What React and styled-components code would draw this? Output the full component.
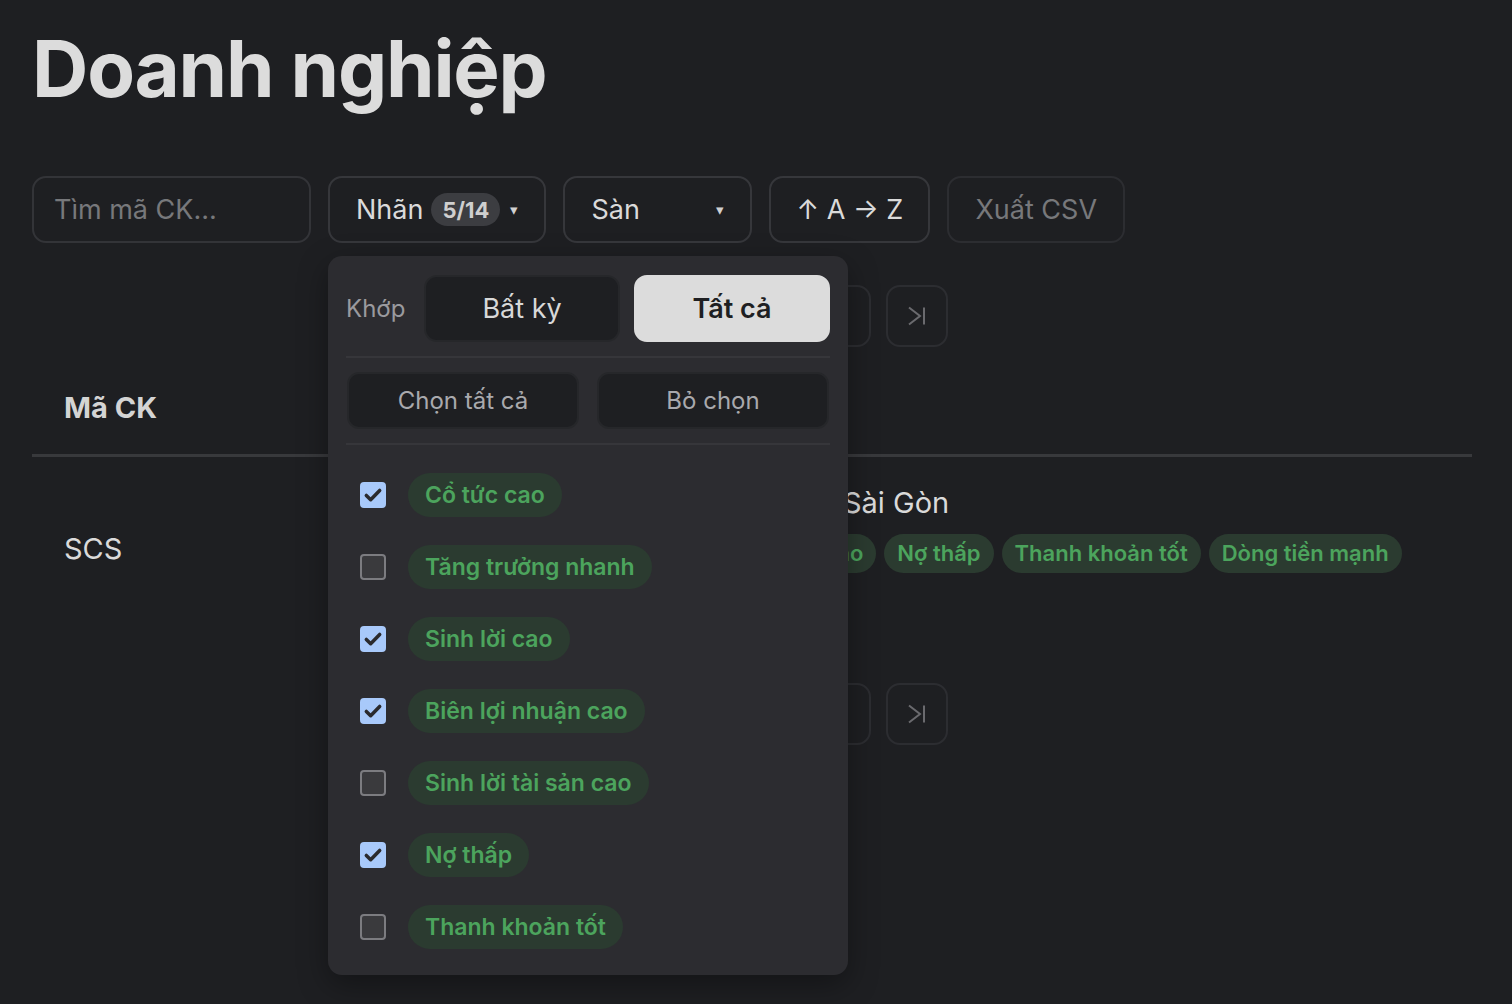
import React from "react";
import styled, { createGlobalStyle } from "styled-components";

const GlobalStyle = createGlobalStyle`
  html, body {
    margin: 0;
    background: #1e1f22;
    color: #dadada;
    font-family: Inter, "Noto Sans", "Liberation Sans", sans-serif;
  }
  * { box-sizing: border-box; }
`;

const LABELS = [
  { name: "Cổ tức cao", on: true },
  { name: "Tăng trưởng nhanh", on: false },
  { name: "Sinh lời cao", on: true },
  { name: "Biên lợi nhuận cao", on: true },
  { name: "Sinh lời tài sản cao", on: false },
  { name: "Nợ thấp", on: true },
  { name: "Thanh khoản tốt", on: false },
  { name: "Dòng tiền mạnh", on: true },
  { name: "Định giá thấp", on: false },
  { name: "Vốn hóa lớn", on: false },
  { name: "Biến động thấp", on: false },
  { name: "Tăng trưởng doanh thu", on: false },
  { name: "Tăng trưởng lợi nhuận", on: false },
  { name: "Nhà nước sở hữu", on: false },
];

const ROW_TAGS = [
  "Cổ tức cao",
  "Sinh lời cao",
  "Biên lợi nhuận cao",
  "Nợ thấp",
  "Thanh khoản tốt",
  "Dòng tiền mạnh",
];

export default function App() {
  return (
    <>
      <GlobalStyle />
      <Page>
        <Title>Doanh nghiệp</Title>
        <Toolbar>
          <SearchInput placeholder="Tìm mã CK..." />
          <FilterWrap>
            <ToolButton>
              Nhãn <Count>5/14</Count>
              <Caret>▾</Caret>
            </ToolButton>
            <Dropdown>
              <MatchRow>
                <MatchLabel>Khớp</MatchLabel>
                <SegButton>Bất kỳ</SegButton>
                <SegButton active>Tất cả</SegButton>
              </MatchRow>
              <Divider />
              <BulkRow>
                <BulkButton>Chọn tất cả</BulkButton>
                <BulkButton>Bỏ chọn</BulkButton>
              </BulkRow>
              <Divider />
              <LabelList>
                {LABELS.map((l) => (
                  <LabelItem key={l.name}>
                    <Check checked={l.on}>
                      {l.on && (
                        <svg width="20" height="20" viewBox="0 0 24 24">
                          <path
                            d="M4 12.5l5.2 5.2L20 6.5"
                            fill="none"
                            stroke="#2a2a2d"
                            strokeWidth="4.2"
                            strokeLinecap="round"
                            strokeLinejoin="round"
                          />
                        </svg>
                      )}
                    </Check>
                    <Tag big>{l.name}</Tag>
                  </LabelItem>
                ))}
              </LabelList>
            </Dropdown>
          </FilterWrap>
          <ToolButton wide>
            Sàn
            <Caret>▾</Caret>
          </ToolButton>
          <ToolButton center>↑ A → Z</ToolButton>
          <ToolButton muted>Xuất CSV</ToolButton>
        </Toolbar>

        <Pager />

        <Table>
          <thead>
            <tr>
              <Th>Mã CK</Th>
              <Th>Tên</Th>
              <Th />
            </tr>
          </thead>
          <tbody>
            <tr>
              <TdCode>SCS</TdCode>
              <TdName>
                <CompanyName>Công ty Cổ phần Dịch vụ Hàng hóa Sài Gòn</CompanyName>
                <TagRow>
                  {ROW_TAGS.map((t) => (
                    <Tag key={t}>{t}</Tag>
                  ))}
                </TagRow>
              </TdName>
              <TdRest />
            </tr>
          </tbody>
        </Table>

        <Pager />
      </Page>
    </>
  );
}

function Pager() {
  return (
    <PagerBar>
      <PageBtn>
        <PageIcon d="M20 3.5 9 12l11 8.5" bar={5} />
      </PageBtn>
      <PageBtn>
        <PageIcon d="M17.5 3.5 6.5 12l11 8.5" />
      </PageBtn>
      <PageInfo>1 / 1</PageInfo>
      <PageBtn>
        <PageIcon d="M6.5 3.5 17.5 12l-11 8.5" />
      </PageBtn>
      <PageBtn>
        <PageIcon d="M4 3.5 15 12 4 20.5" bar={19} />
      </PageBtn>
    </PagerBar>
  );
}

function PageIcon({ d, bar }) {
  return (
    <svg width="24" height="24" viewBox="0 0 24 24" fill="none" stroke="#6a6a6e" strokeWidth="2" strokeLinecap="butt" strokeLinejoin="miter">
      <path d={d} />
      {bar && <path d={`M${bar} 3.5v17`} />}
    </svg>
  );
}

const Page = styled.div`
  padding: 0 40px 40px 32px;
  min-height: 1004px;
`;

const Title = styled.h1`
  margin: 0;
  padding-top: 22px;
  font-size: 78px;
  line-height: 94px;
  font-weight: 700;
  letter-spacing: -1.2px;
  color: #dcdcdc;
`;

const Toolbar = styled.div`
  display: flex;
  gap: 17px;
  margin-top: 60px;
  height: 67px;
`;

const SearchInput = styled.input`
  width: 279px;
  height: 67px;
  background: transparent;
  border: 2px solid #333438;
  border-radius: 14px;
  padding: 0 20px;
  font: inherit;
  font-size: 27px;
  color: #dadada;
  outline: none;
  &::placeholder { color: #77787b; }
`;

const FilterWrap = styled.div`
  position: relative;
`;

const ToolButton = styled.button`
  height: 67px;
  display: flex;
  align-items: center;
  justify-content: ${({ wide, center }) => (wide ? "space-between" : center ? "center" : "flex-start")};
  width: ${({ wide, center }) => (wide ? "189px" : center ? "161px" : "auto")};
  gap: 8px;
  padding: ${({ center }) => (center ? "0" : "0 26px 0 26px")};
  white-space: nowrap;
  background: transparent;
  border: 2px solid ${({ muted }) => (muted ? "#2c2d31" : "#36373b")};
  border-radius: 14px;
  font: inherit;
  font-size: 27px;
  color: ${({ muted }) => (muted ? "#77787b" : "#dadada")};
`;

const Count = styled.span`
  display: inline-flex;
  align-items: center;
  height: 33px;
  padding: 0 11px;
  border-radius: 17px;
  background: #3c3d41;
  font-size: 22px;
  font-weight: 700;
  color: #cfcfcf;
`;

const Caret = styled.span`
  font-size: 15px;
  color: #d0d0d0;
  margin-left: 2px;
`;

const Dropdown = styled.div`
  position: absolute;
  top: 80px;
  left: 0;
  z-index: 10;
  width: 520px;
  height: 719px;
  padding: 19px 18px 0;
  background: #2c2c30;
  border-radius: 14px;
  box-shadow: 0 10px 30px rgba(0, 0, 0, 0.35);
  display: flex;
  flex-direction: column;
`;

const MatchRow = styled.div`
  display: grid;
  grid-template-columns: 64px 1fr 1fr;
  column-gap: 14px;
  align-items: center;
  padding-bottom: 14px;
`;

const MatchLabel = styled.span`
  font-size: 24px;
  color: #9a9a9e;
`;

const SegButton = styled.button`
  height: 67px;
  border-radius: 13px;
  border: 2px solid ${({ active }) => (active ? "#dcdcdc" : "#26272a")};
  background: ${({ active }) => (active ? "#dcdcdc" : "#1e1f22")};
  color: ${({ active }) => (active ? "#1e1f22" : "#d8d8d8")};
  font: inherit;
  font-size: 27px;
  font-weight: ${({ active }) => (active ? 600 : 400)};
`;

const Divider = styled.div`
  height: 2px;
  background: #36363a;
`;

const BulkRow = styled.div`
  display: grid;
  grid-template-columns: 1fr 1fr;
  gap: 18px;
  padding: 14px 1px;
`;

const BulkButton = styled.button`
  height: 57px;
  border-radius: 12px;
  border: 2px solid #26272a;
  background: #1e1f22;
  color: #a9a9ad;
  font: inherit;
  font-size: 24px;
`;

const LabelList = styled.div`
  flex: 1;
  overflow: hidden;
  padding: 14px 14px 0;
`;

const LabelItem = styled.div`
  display: flex;
  align-items: center;
  gap: 22px;
  height: 72px;
`;

const Check = styled.span`
  flex: none;
  width: 26px;
  height: 26px;
  border-radius: 4px;
  display: flex;
  align-items: center;
  justify-content: center;
  background: ${({ checked }) => (checked ? "#a8c9fa" : "#3a3a3d")};
  border: 2px solid ${({ checked }) => (checked ? "#a8c9fa" : "#7c7c80")};
`;

const Tag = styled.span`
  display: inline-flex;
  align-items: center;
  height: ${({ big }) => (big ? "44px" : "39px")};
  padding: 0 ${({ big }) => (big ? "17px" : "13px")};
  border-radius: 22px;
  background: #2b3b30;
  color: #4ca45d;
  font-size: ${({ big }) => (big ? "23px" : "22px")};
  font-weight: 600;
  white-space: nowrap;
`;

const PagerBar = styled.div`
  display: flex;
  justify-content: center;
  align-items: center;
  gap: 15px;
  margin-top: 42px;
`;

const PageBtn = styled.button`
  width: 62px;
  height: 62px;
  display: flex;
  align-items: center;
  justify-content: center;
  background: transparent;
  border: 2px solid #2c2d31;
  border-radius: 14px;
`;

const PageInfo = styled.span`
  min-width: 84px;
  text-align: center;
  font-size: 24px;
  color: #9a9a9e;
`;

const Table = styled.table`
  width: 100%;
  border-collapse: collapse;
  margin-top: 14px;
`;

const Th = styled.th`
  text-align: left;
  height: 94px;
  padding: 0 32px;
  font-size: 29px;
  font-weight: 700;
  color: #d4d4d4;
  border-bottom: 3px solid #38393c;
`;

const TdCode = styled.td`
  width: 300px;
  height: 186px;
  padding: 0 32px;
  vertical-align: middle;
  font-size: 29px;
  color: #dadada;
`;

const TdName = styled.td`
  vertical-align: top;
  padding: 29px 0 0 20px;
  width: 1060px;
`;

const TdRest = styled.td``;

const CompanyName = styled.div`
  font-size: 29px;
  line-height: 34px;
  color: #dadada;
`;

const TagRow = styled.div`
  display: flex;
  gap: 8px;
  margin-top: 14px;
`;
